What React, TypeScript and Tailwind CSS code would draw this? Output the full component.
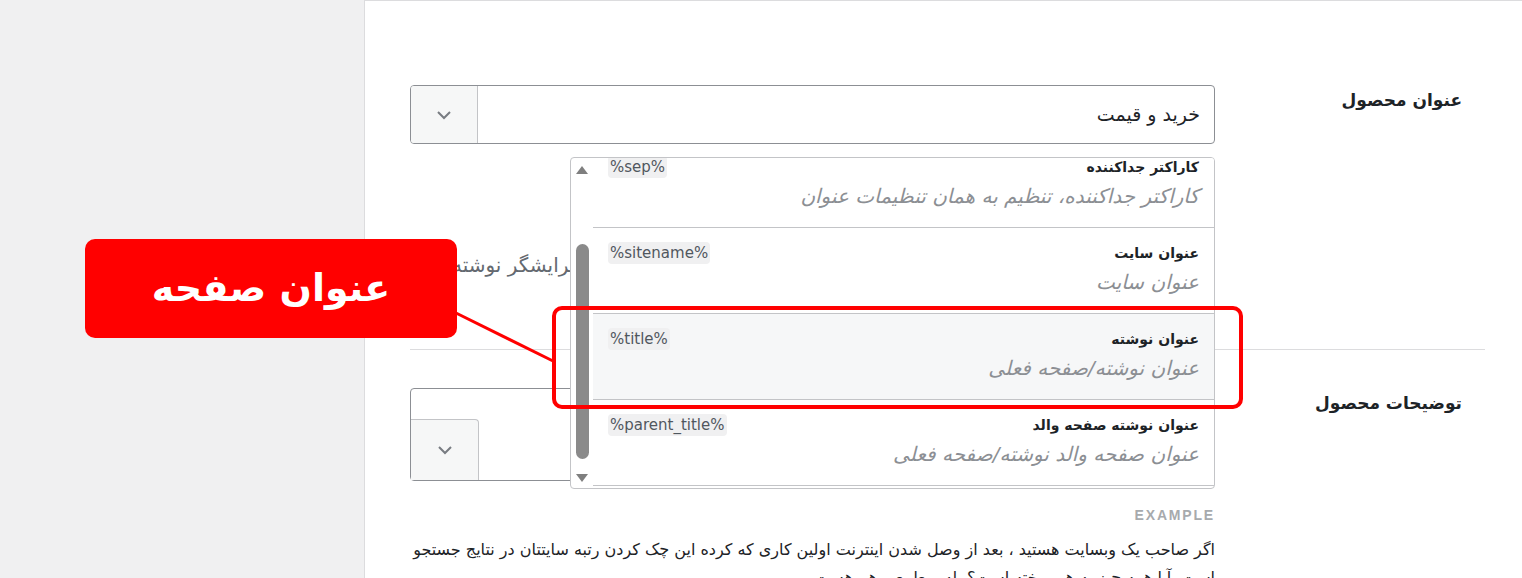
import React from 'react';

const items = [
  { title: 'کاراکتر جداکننده', desc: 'کاراکتر جداکننده، تنظیم به همان تنظیمات عنوان', tag: '%sep%', active: false },
  { title: 'عنوان سایت', desc: 'عنوان سایت', tag: '%sitename%', active: false },
  { title: 'عنوان نوشته', desc: 'عنوان نوشته/صفحه فعلی', tag: '%title%', active: true },
  { title: 'عنوان نوشته صفحه والد', desc: 'عنوان صفحه والد نوشته/صفحه فعلی', tag: '%parent_title%', active: false },
];

const Chevron = () => (
  <svg width="20" height="20" viewBox="0 0 20 20" fill="none" stroke="#787c82" strokeWidth="2">
    <path d="M4 7l6 6 6-6" />
  </svg>
);

const App = () => {
  return (
    <div className="relative h-[578px] w-[1522px] overflow-hidden bg-[#f0f0f1] flex font-['DejaVu_Sans',sans-serif] text-[#1d2327]">
      <div className="w-[364px] shrink-0" />

      <div dir="rtl" className="flex-1 min-w-0 bg-white border-l border-t border-[#dcdcde] pt-[46px] pr-[37px] pl-[45px]">
        {/* ردیف عنوان */}
        <div className="flex border-b border-[#dcdcde] py-[38px]">
          <div className="w-[270px] shrink-0 pr-[23px] pt-[3px] text-[17px] font-bold">عنوان محصول</div>
          <div className="relative flex-1 min-w-0 h-[226px]">
            <div className="flex h-[59px] border border-[#8c8f94] rounded-[4px] overflow-hidden">
              <div className="flex-1 flex items-center pr-[14px] text-[19px]">خرید و قیمت</div>
              <div className="w-[67px] bg-[#f6f7f7] border-r border-[#c3c4c7] flex items-center justify-center">
                <Chevron />
              </div>
            </div>
            <p className="mt-[106px] pr-[630px] text-[20px] text-[#646970] whitespace-nowrap">
              ویرایشگر نوشته شده
            </p>

            {/* منوی متغیرها */}
            <div className="absolute top-[72px] right-0 w-[645px] h-[332px] bg-white border border-[#c3c4c7] rounded-[4px] overflow-hidden flex z-10">
              <div className="flex-1 overflow-hidden">
                <div className="-mt-[16px]">
                  {items.map((it) => (
                    <div
                      key={it.tag}
                      className={`h-[86px] border-b border-[#c3c4c7] px-[15px] pt-[14px] ${it.active ? 'bg-[#f6f7f8]' : 'bg-white'}`}
                    >
                      <div className="flex items-start justify-between">
                        <span className="text-[14px] font-bold leading-[22px]">{it.title}</span>
                        <span dir="ltr" className="bg-[#f0f0f1] rounded-[4px] px-[2px] text-[15px] leading-[22px] text-[#50575e]">
                          {it.tag}
                        </span>
                      </div>
                      <div className="mt-[5px] text-[20px] italic leading-[26px] text-[#8c8f94]">{it.desc}</div>
                    </div>
                  ))}
                </div>
              </div>
              <div className="w-[22px] shrink-0 flex flex-col items-center pt-[8px] pb-[6px]">
                <div className="w-0 h-0 border-x-[6px] border-x-transparent border-b-[8px] border-b-[#7f7f7f]" />
                <div className="mt-[70px] w-[13px] h-[215px] rounded-full bg-[#8a8a8a]" />
                <div className="mt-auto w-0 h-0 border-x-[6px] border-x-transparent border-t-[8px] border-t-[#7f7f7f]" />
              </div>
            </div>
          </div>
        </div>

        {/* ردیف توضیحات */}
        <div className="flex py-[38px]">
          <div className="w-[270px] shrink-0 pr-[23px] pt-[3px] text-[17px] font-bold">توضیحات محصول</div>
          <div className="flex-1 min-w-0">
            <div className="h-[93px] border border-[#8c8f94] rounded-[4px] flex flex-col justify-end items-end">
              <div className="w-[68px] h-[61px] bg-[#f6f7f7] border-t border-r border-[#c3c4c7] rounded-tr-[4px] flex items-center justify-center">
                <Chevron />
              </div>
            </div>
            <div className="mt-[24px] text-[14px] font-semibold tracking-[0.13em] text-[#a7aaad] font-['Liberation_Sans',sans-serif]">EXAMPLE</div>
            <p className="mt-[10px] text-[16px] leading-[28px] text-[#1d2327]">
              اگر صاحب یک وبسایت هستید ، بعد از وصل شدن اینترنت اولین کاری که کرده این چک کردن رتبه سایتتان در نتایج جستجو است. آیا همه چیز به هم ریخته است؟ بله و طبیعی هم هست
            </p>
          </div>
        </div>
      </div>

      {/* برچسب راهنما */}
      <div className="absolute left-[85px] top-[239px] w-[372px] h-[99px] bg-[#ff0000] rounded-[10px] flex items-center justify-center text-white text-[38px] font-bold">
        عنوان صفحه
      </div>
      <svg className="absolute left-0 top-0 pointer-events-none z-20" width="1522" height="578">
        <line x1="456" y1="313" x2="553" y2="361" stroke="#ff0000" strokeWidth="3" />
      </svg>
      <div className="absolute left-[552px] top-[306px] w-[691px] h-[103px] border-[4px] border-[#ff0000] rounded-[10px] z-20" />
    </div>
  );
};

export default App;
